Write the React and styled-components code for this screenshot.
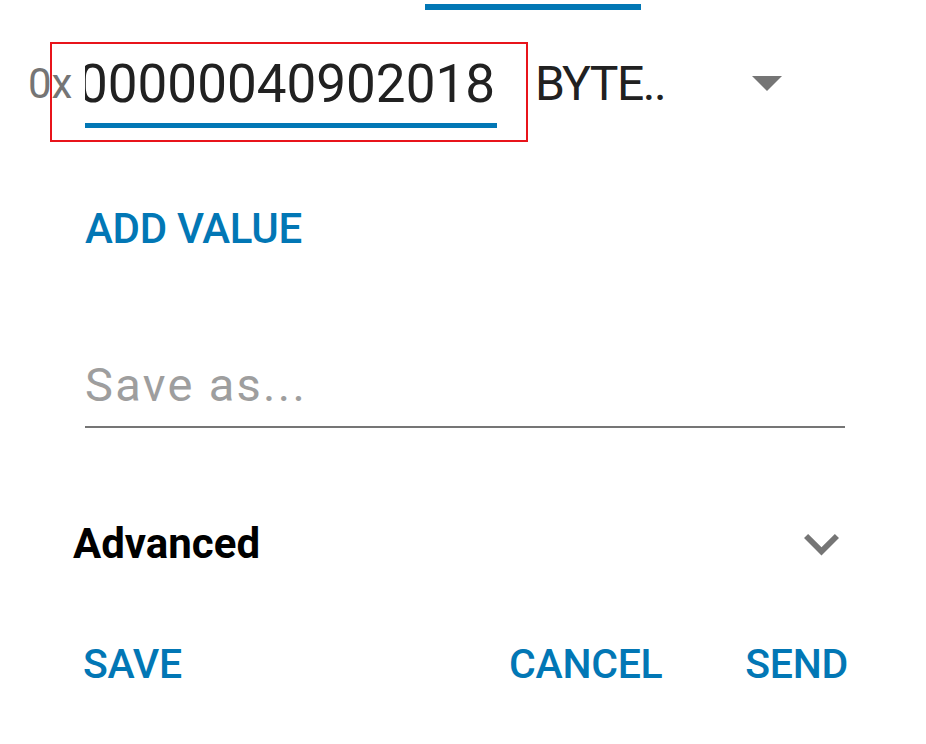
import styled, { createGlobalStyle } from "styled-components";

const GlobalStyle = createGlobalStyle`
  html, body {
    margin: 0;
    padding: 0;
    background: #ffffff;
    overflow: hidden;
  }
  body {
    font-family: Roboto, "Noto Sans", sans-serif;
  }
`;

const BLUE = "#0277b5";
const GREY = "#757575";

const Page = styled.div`
  width: 926px;
  height: 744px;
  display: flex;
  flex-direction: column;
  background: #fff;
`;

const TabBar = styled.div`
  height: 54px;
  display: flex;
  align-items: flex-start;
`;

const TabIndicator = styled.div`
  margin: 4px 0 0 425px;
  width: 216px;
  height: 6px;
  background: ${BLUE};
`;

const AddressRow = styled.div`
  position: relative;
  display: flex;
  align-items: flex-start;
`;

const Prefix = styled.span`
  width: 85px;
  flex-shrink: 0;
  box-sizing: border-box;
  padding-left: 28px;
  font-size: 42px;
  line-height: 60px;
  white-space: nowrap;
  color: ${GREY};
`;

// value is right-aligned so the leading digit gets clipped like a scrolled input
const HexField = styled.div`
  width: 412px;
  min-width: 0;
  flex-shrink: 0;
  overflow: hidden;
  display: flex;
  justify-content: flex-end;
  padding-bottom: 9px;
  border-bottom: 5px solid ${BLUE};
  font-size: 53px;
  line-height: 60px;
  color: #212121;
  white-space: nowrap;
`;

const HexValue = styled.span`
  flex-shrink: 0;
  padding-right: 2px;
`;

const TypeSelect = styled.div`
  margin-left: 38px;
  width: 247px;
  flex-shrink: 0;
  display: flex;
  justify-content: space-between;
  align-items: flex-start;
`;

const TypeLabel = styled.span`
  font-size: 48px;
  line-height: 60px;
  letter-spacing: -1.5px;
  color: #212121;
`;

const Caret = styled.span`
  margin-top: 22px;
  width: 0;
  height: 0;
  border-left: 15px solid transparent;
  border-right: 15px solid transparent;
  border-top: 15px solid ${GREY};
`;

const Highlight = styled.div`
  position: absolute;
  left: 50px;
  top: -12px;
  width: 478px;
  height: 100px;
  box-sizing: border-box;
  border: 2px solid #e8141b;
  pointer-events: none;
`;

const TextButton = styled.span`
  font-size: ${(p) => p.size || 41}px;
  font-weight: 500;
  line-height: 48px;
  color: ${BLUE};
  letter-spacing: -0.3px;
`;

const AddValue = styled.div`
  margin-top: 77px;
  padding-left: 85px;
`;

const SaveAsField = styled.div`
  margin: 104px 0 0 85px;
  width: 760px;
  padding-bottom: 13px;
  border-bottom: 2px solid ${GREY};
  font-size: 47px;
  line-height: 56px;
  letter-spacing: 2.3px;
  color: #9e9e9e;
`;

const AdvancedRow = styled.div`
  margin-top: 91px;
  padding: 0 87px 0 73px;
  display: flex;
  justify-content: space-between;
  align-items: flex-start;
`;

const AdvancedLabel = styled.span`
  font-size: 42px;
  font-weight: 700;
  line-height: 50px;
  color: #000;
`;

const Chevron = styled.svg`
  margin-top: 15px;
  width: 35px;
  height: 21.6px;
  fill: ${GREY};
`;

const ActionRow = styled.div`
  margin-top: 71px;
  padding: 0 78px 0 83px;
  display: flex;
  align-items: flex-start;
`;

const Spacer = styled.div`
  flex: 1;
`;

const RightActions = styled.div`
  display: flex;
  gap: 83px;
`;

export default function App() {
  return (
    <>
      <GlobalStyle />
      <Page>
        <TabBar>
          <TabIndicator />
        </TabBar>

        <AddressRow>
          <Prefix>0x</Prefix>
          <HexField>
            <HexValue>0000000040902018</HexValue>
          </HexField>
          <TypeSelect>
            <TypeLabel>BYTE..</TypeLabel>
            <Caret />
          </TypeSelect>
          <Highlight />
        </AddressRow>

        <AddValue>
          <TextButton size={42}>ADD VALUE</TextButton>
        </AddValue>

        <SaveAsField>Save as...</SaveAsField>

        <AdvancedRow>
          <AdvancedLabel>Advanced</AdvancedLabel>
          <Chevron viewBox="6 8.59 12 7.41">
            <path d="M16.59 8.59L12 13.17 7.41 8.59 6 10l6 6 6-6z" />
          </Chevron>
        </AdvancedRow>

        <ActionRow>
          <TextButton>SAVE</TextButton>
          <Spacer />
          <RightActions>
            <TextButton>CANCEL</TextButton>
            <TextButton>SEND</TextButton>
          </RightActions>
        </ActionRow>
      </Page>
    </>
  );
}
